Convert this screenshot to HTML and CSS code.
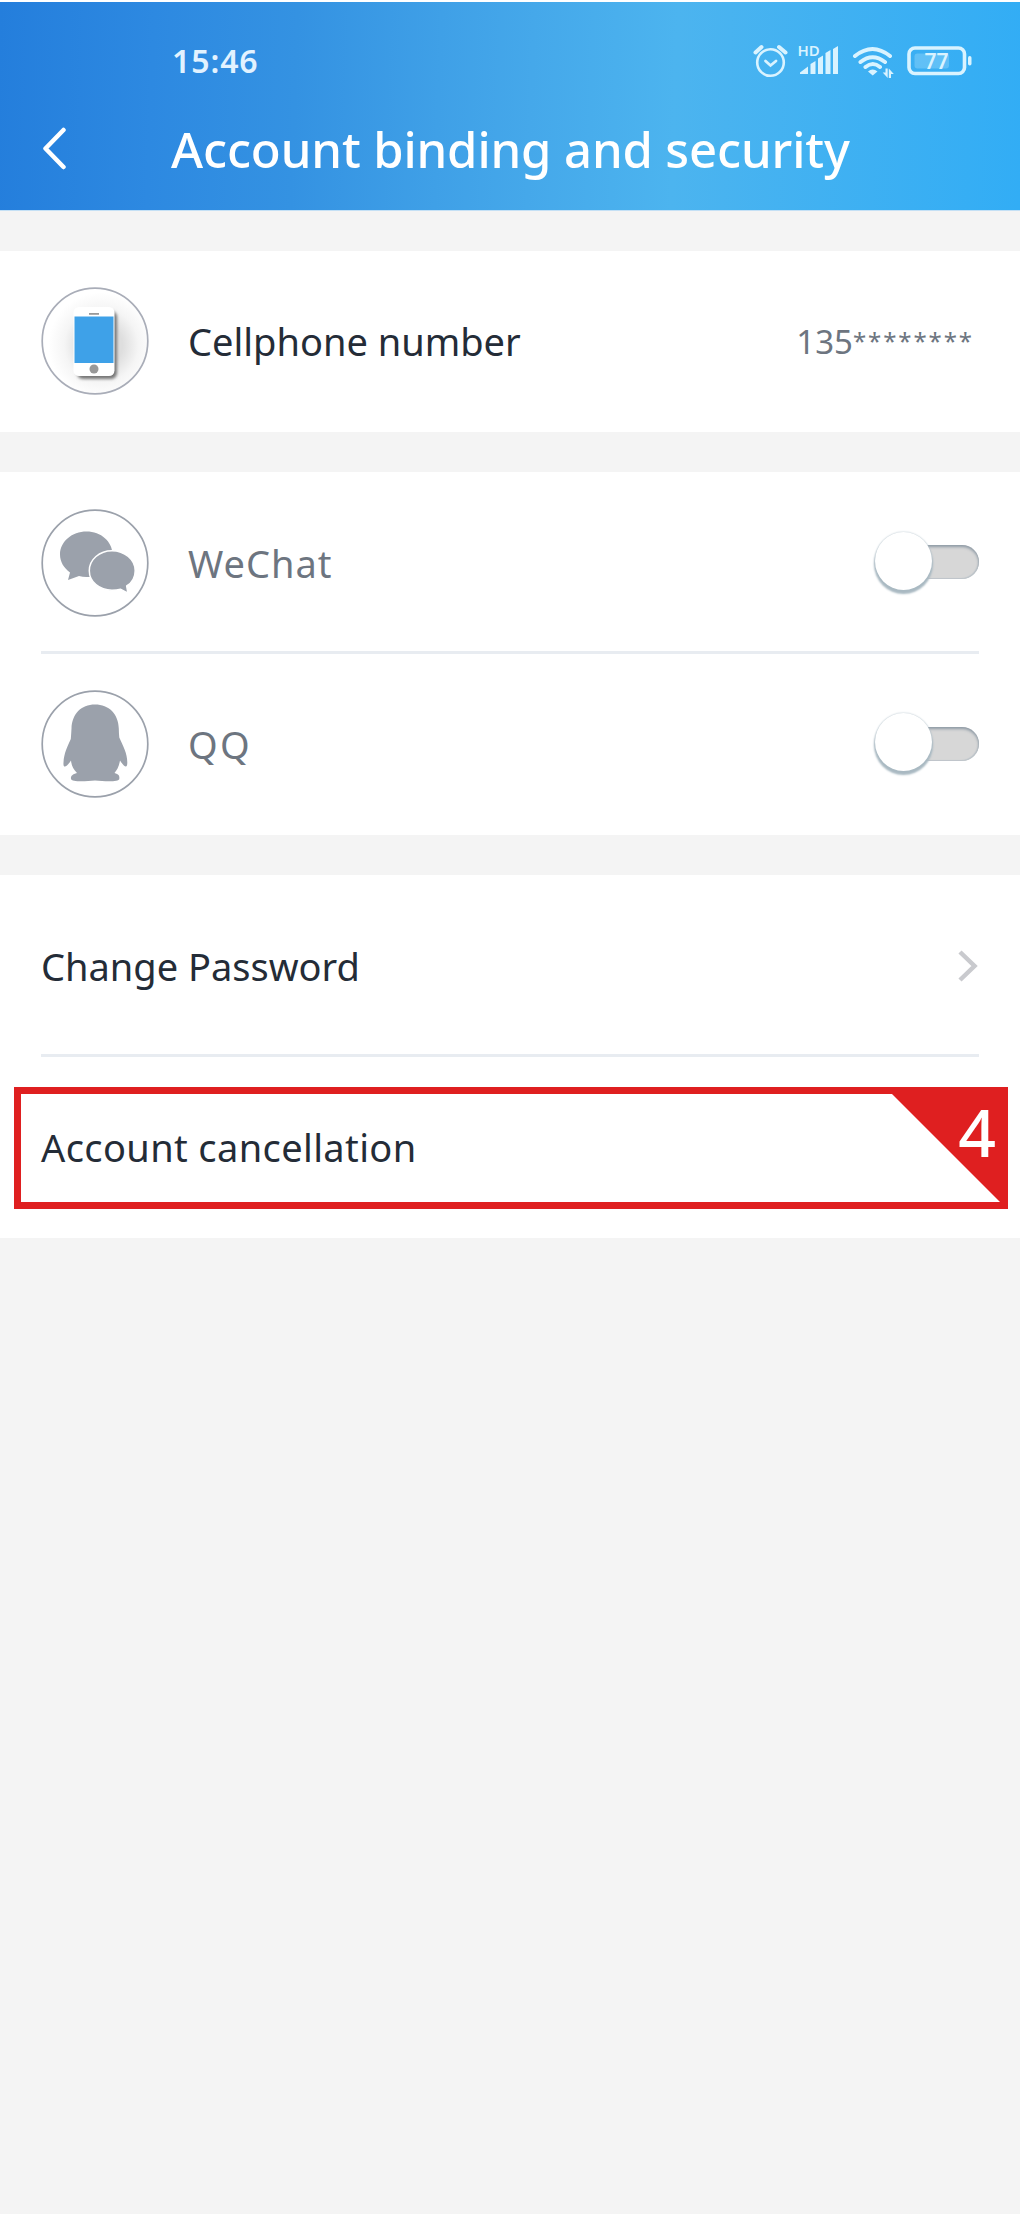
FILE: index.html
```html
<!DOCTYPE html>
<html lang="en">
<head>
<meta charset="utf-8">
<title>Account binding and security</title>
<link rel="stylesheet" href="styles.css">
</head>
<body>
<header class="header">
  <div class="status">
    <span class="time">15:46</span>
    <svg class="status-icons" width="222" height="40" viewBox="750 40 222 40" fill="none" stroke="#d9f3ff" stroke-linecap="round">
      <circle cx="770.5" cy="62.5" r="13.3" stroke-width="2.6"/>
      <path d="M765.5 61l5 4.5 5.500-4.500" stroke-width="2.800"/>
      <path d="M755.500 52.500l6-5.500M779 47l6.500 5.500" stroke-width="4"/>
      <g fill="#d9f3ff" stroke="none">
        <text class="hd" x="797.500" y="56">HD</text>
        <path d="M800 72.500l8-6v7.500h-8zM810.500 64l5-3v13h-5zM818 58.500l5-3V74h-5zM825.500 53l5-3v24h-5zM833 49l5-3v28h-5z"/>
        <path d="M868 71.500q4.500-4 9.500 0l-4.800 4z"/>
        <path d="M885.500 68.500h2.200v9.500l-5-5.500h2.800zM888.800 78v-9.500l5 5.500h-2.800v4z"/>
        <rect x="914.500" y="53.500" width="34.500" height="15" rx="3" opacity=".25"/>
        <text class="battery-level" x="924.500" y="69">77</text>
        <rect x="968" y="56" width="3.500" height="9.500" rx="1.700"/>
      </g>
      <path d="M855 56q17.500-14 35 0M860.500 62q12-9.500 24.500 0M865.500 67q7.500-6 14.500 0" stroke-width="4"/>
      <rect x="909" y="48" width="55.500" height="25.500" rx="6" stroke-width="3.600"/>
    </svg>
  </div>
  <div class="titlebar">
    <svg class="back" width="25" height="44" viewBox="0 0 25 44"><path d="M22.500 3L4.500 21.500 22.500 40" fill="none" stroke="#fff" stroke-width="4.500" stroke-linecap="round" stroke-linejoin="round"/></svg>
    <h1 class="title">Account binding and security</h1>
  </div>
</header>
<main class="content">
  <section class="card phone-card">
    <div class="row">
      <svg class="avatar" width="108" height="108" viewBox="0 0 108 108">
        <defs>
          <radialGradient id="halo" cx=".56" cy=".54"><stop offset=".4" stop-color="#dedede"/><stop offset=".7" stop-color="#f5f5f5"/><stop offset="1" stop-color="#fff"/></radialGradient>
          <filter id="soft" x="-30%" y="-30%" width="160%" height="160%"><feGaussianBlur stdDeviation="1.500"/></filter>
        </defs>
        <circle cx="54" cy="54" r="52.800" fill="url(#halo)" stroke="#a9adb8" stroke-width="1.700"/>
        <rect x="36" y="24" width="40" height="68" rx="6" fill="#777" filter="url(#soft)"/>
        <rect x="32.500" y="20" width="41" height="69" rx="5.500" fill="#fff"/>
        <rect x="33.500" y="29.500" width="39" height="46.500" fill="#3ea1e8"/>
        <rect x="48" y="26" width="10" height="1.800" fill="#999"/>
        <circle cx="53" cy="82" r="4.500" fill="#999"/>
      </svg>
      <span class="label">Cellphone number</span>
      <span class="value">135<span class="mask">********</span></span>
    </div>
  </section>
  <section class="card tail">
    <div class="row upper muted">
      <svg class="avatar" width="108" height="108" viewBox="0 0 108 108">
        <circle cx="54" cy="54" r="52.800" fill="#fff" stroke="#9ba1ab" stroke-width="1.700"/>
        <path d="M45.500 22.500c14.500 0 26 10 26 23s-11.500 22.500-26 22.500q-4 0-7.500-1l-11 4 2-7.500C23 59 19 53 19 45.500c0-13 12-23 26.500-23z" fill="#9ba1ab"/>
        <path d="M71 41.700c12.500 0 23.200 8.800 23.200 20 0 7-4 12.500-8.500 15.300l1.200 7.200-7.300-4q-4 1-8.600 1c-12.500 0-22.700-8.300-22.700-19.500s10.200-20 22.700-20z" fill="#9ba1ab" stroke="#fff" stroke-width="1.500"/>
      </svg>
      <span class="label wechat">WeChat</span>
      <span class="switch"><span class="knob"></span></span>
    </div>
    <hr class="divider">
    <div class="row muted">
      <svg class="avatar" width="108" height="108" viewBox="0 0 108 108">
        <circle cx="54" cy="54" r="52.800" fill="#fff" stroke="#9ba1ab" stroke-width="1.700"/>
        <path d="M54 14.500c14 0 23.500 9.500 23.800 24q0 4 .5 9c3.500 8 8 15.500 8 25 0 6-2.300 5.500-7.300-2-1 6-3 9.500-5.500 12.500 5 1.500 5 3 4.800 6-.3 3-14 2.500-24.300 1.500-10 1-23.500 1.500-24-1.500-.4-3 1-4.500 6-6-3.500-3.500-5.500-7-6-12.500-5 7.500-8 8-7.500 2 .5-9.500 4-16 7.300-23.500q.4-5 .7-10.500C31 24 40 14.500 54 14.500z" fill="#9ba1ab"/>
      </svg>
      <span class="label qq">QQ</span>
      <span class="switch"><span class="knob"></span></span>
    </div>
  </section>
  <section class="card tail">
    <div class="row upper">
      <span class="label password">Change Password</span>
      <svg class="chevron" width="22" height="34" viewBox="0 0 22 34"><path d="M3 3l14.500 14L3 31" fill="none" stroke="#c9cace" stroke-width="4.500"/></svg>
    </div>
    <hr class="divider">
    <div class="row callout-row">
      <span class="label cancellation">Account cancellation</span>
      <div class="callout"><span class="corner"></span><span class="step">4</span></div>
    </div>
  </section>
</main>
</body>
</html>
```

FILE: styles.css
```css
* { box-sizing: border-box; }
body {
  margin: 0;
  min-height: 2214px;
  background: #f4f4f4;
  color: #242c37;
  font-family: "Noto Sans", sans-serif;
}
.header {
  height: 211px;
  border-top: 2px solid #fff;
  border-bottom: 1px solid #c4e0f5;
  background: linear-gradient(92deg, #247edc 0%, #2d89e1 15%, #3492e2 29%, #3fa0e7 43%, #45a8ea 52%, #4cb4ef 66%, #32adf5 100%);
}
.status {
  display: flex;
  align-items: center;
  justify-content: space-between;
  height: 94px;
  padding: 22px 48px 0 172px;
}
.time { margin-top: 2px; color: #e2f2ff; font-size: 32px; font-weight: 600; line-height: 40px; letter-spacing: .9px; }
.hd { font-size: 15px; font-weight: 600; }
.battery-level { font-size: 21px; font-weight: 600; }
.titlebar { display: flex; align-items: center; height: 100px; padding-left: 41px; }
.back { margin-top: 6px; }
.title {
  margin: 5px 0 0 105px;
  color: #fff;
  font-size: 49px;
  font-weight: 500;
  line-height: 60px;
  letter-spacing: -.12px;
  white-space: nowrap;
}
.content { display: flex; flex-direction: column; gap: 40px; padding-top: 40px; }
.card { background: #fff; }
.phone-card, .tail { padding-bottom: 1px; }
.row { display: flex; align-items: center; height: 180px; padding: 0 41px; }
.row.upper { height: 179px; padding-top: 2px; }
.label { font-size: 38px; line-height: 52px; white-space: nowrap; }
.wechat { letter-spacing: 1px; }
.qq { letter-spacing: 2.4px; }
.password { letter-spacing: 0; }
.cancellation { letter-spacing: .38px; }
.avatar { flex: none; margin-right: 39px; }
.muted { color: #6d7580; }
.value {
  margin: 1px 0 0 auto;
  padding-right: 5px;
  color: #6d7580;
  font-size: 33px;
  line-height: 44px;
}
.mask { font-size: 24px; letter-spacing: 1.9px; vertical-align: 4px; line-height: 1; }
.divider { height: 3px; margin: 0 41px; border: 0; background: #e8ecf1; }
.switch {
  display: flex;
  align-items: center;
  width: 105px;
  height: 34px;
  margin: 0 0 1px auto;
}
.switch::after {
  content: "";
  width: 60px;
  height: 34px;
  margin-left: -13px;
  border-radius: 0 17px 17px 0;
  background: #d7d7d7;
  box-shadow: inset 0 2px 3px #8d99a4, inset -1px -1px 1px #c0c7cc;
}
.knob {
  z-index: 1;
  flex: none;
  width: 57px;
  height: 58px;
  margin: 0 0 3px 1px;
  border-radius: 50%;
  background: #fff;
  box-shadow: 0 3px 2px 1px #a9b9c2, 0 0 2px #b0bfc8;
}
.chevron { margin-left: auto; }
.callout-row { position: relative; }
.callout {
  position: absolute;
  inset: 30px 12px 28px 14px;
  border: 7px solid #df1f20;
}
.corner {
  position: absolute;
  top: 0;
  right: 0;
  width: 109px;
  height: 109px;
  background: #df1f20;
  clip-path: polygon(0 0, 100% 0, 100% 100%);
}
.step { position: absolute; right: 5px; top: -7px; color: #fff; font-size: 66px; line-height: 88px; font-weight: 500; }
```
